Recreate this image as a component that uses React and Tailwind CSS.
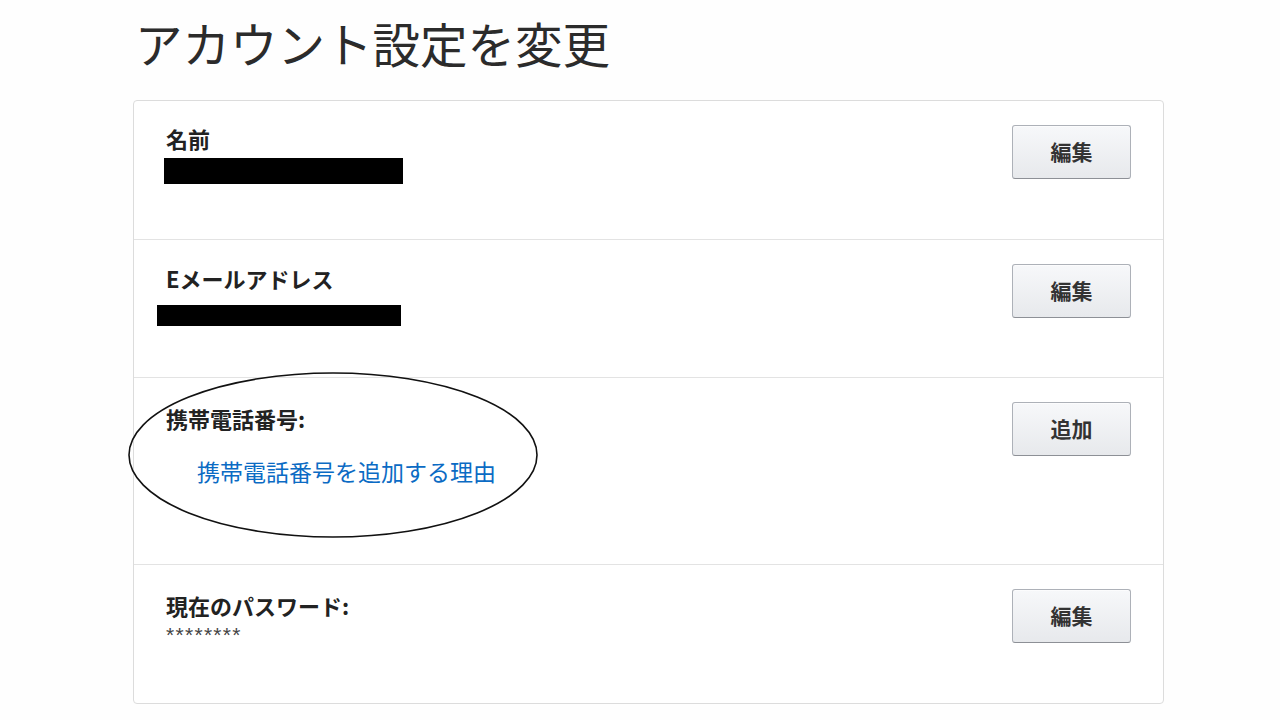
import React from 'react';

const jp = { fontFamily: '"Noto Sans CJK JP", "Noto Sans", sans-serif' };

const EditButton = ({ label }) => (
  <button className="w-[119px] h-[54px] rounded-[3px] border border-[#adb1b8] border-b-[#8d9096] bg-gradient-to-b from-[#f7f8fa] to-[#e7e9ec] text-[21px] font-bold text-[#333] shadow-[0_1px_0_rgba(255,255,255,0.6)_inset]">
    {label}
  </button>
);

const Row = ({ height, children, button, border = true }) => (
  <div className={`flex justify-between pl-8 pr-8 pt-6 ${height} ${border ? 'border-b border-[#e3e3e3]' : ''}`}>
    <div className="flex flex-col">{children}</div>
    <div>
      <EditButton label={button} />
    </div>
  </div>
);

const App = () => {
  return (
    <div className="w-[1280px] h-[720px] bg-[#fefefe] overflow-hidden" style={jp}>
      <div className="ml-[133px] w-[1031px] pt-[14px]">
        <h1 className="text-[47.5px] leading-[58px] font-normal text-[#2b2b2b] pl-[2px]">
          アカウント設定を変更
        </h1>

        <div className="relative mt-[28px] border border-[#dcdcdc] rounded-[4px] bg-white">
          <Row height="h-[139px]" button="編集">
            <span className="text-[22px] leading-[30px] font-bold text-[#222] -mt-[2px]">名前</span>
            <div className="mt-[5px] -ml-[2px] w-[239px] h-[26px] bg-black" />
          </Row>

          <Row height="h-[138px]" button="編集">
            <span className="text-[22px] leading-[30px] font-bold text-[#222] -mt-[1px]">Eメールアドレス</span>
            <div className="mt-[12px] -ml-[9px] w-[244px] h-[21px] bg-black" />
          </Row>

          <Row height="h-[187px]" button="追加">
            <span className="text-[22px] leading-[30px] font-bold text-[#222] mt-[1px]">携帯電話番号:</span>
            <a className="mt-[23px] ml-[31px] text-[23px] leading-[30px] text-[#0b6bc4]">
              携帯電話番号を追加する理由
            </a>
          </Row>

          <Row height="h-[138px]" button="編集" border={false}>
            <span className="text-[22px] leading-[30px] font-bold text-[#222] mt-[1px]">現在のパスワード:</span>
            <span
              className="mt-[7px] text-[21px] leading-[16px] text-[#444] tracking-[1.3px]"
              style={{ fontFamily: '"Liberation Sans", sans-serif' }}
            >
              ********
            </span>
          </Row>

          <svg
            className="absolute left-[-7px] top-[270px] pointer-events-none"
            width="412"
            height="168"
            viewBox="0 0 412 168"
          >
            <ellipse cx="206" cy="84" rx="204" ry="82" fill="none" stroke="#111" strokeWidth="1.6" />
          </svg>
        </div>
      </div>
    </div>
  );
};

export default App;
